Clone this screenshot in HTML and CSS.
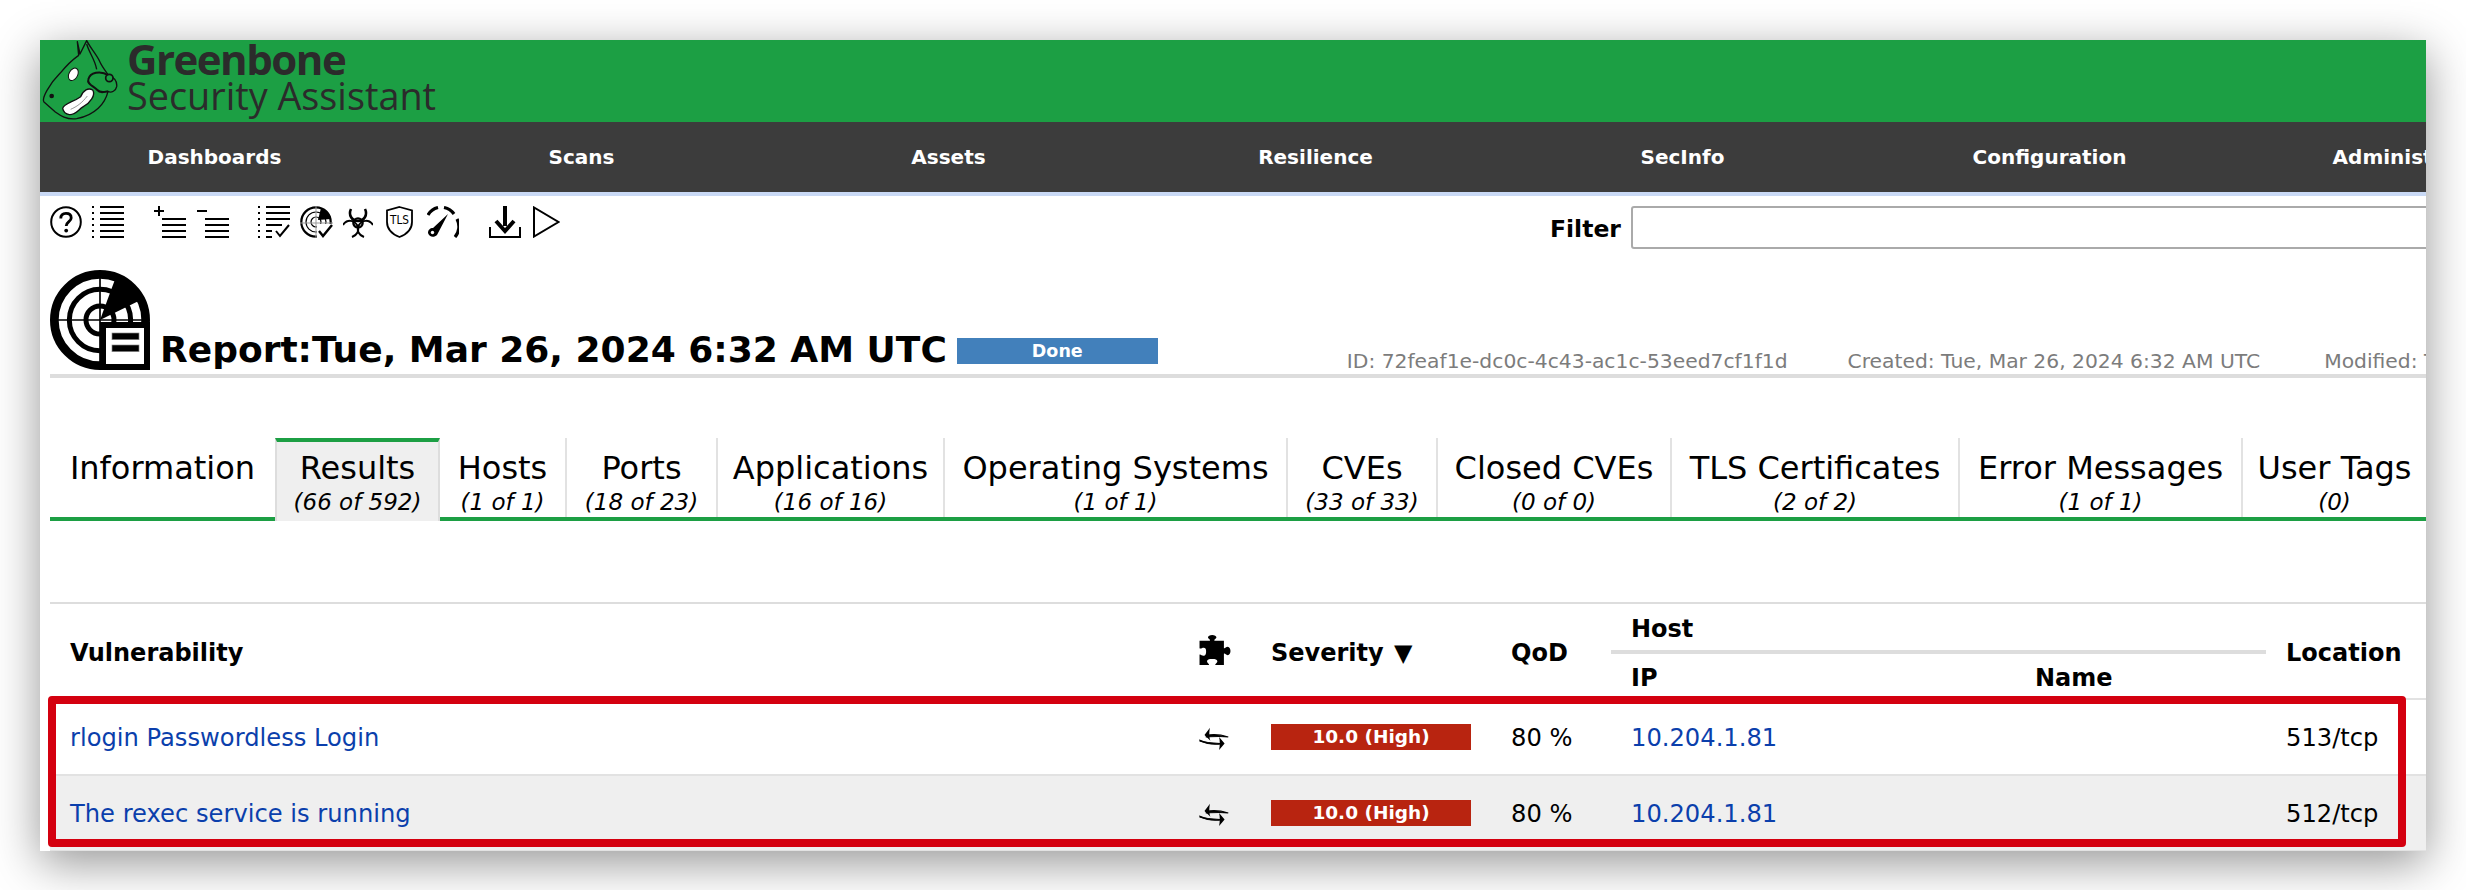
FILE: index.html
```html
<!DOCTYPE html>
<html lang="en">
<head>
<meta charset="utf-8">
<title>Greenbone Security Assistant</title>
<link rel="stylesheet" href="styles.css">
</head>
<body>
<div class="window">
  <header class="brand">
    <svg class="logo" viewBox="0 0 270 255">
      <path d="M112 5 L120 42 L140 2 C150 22 168 42 178 62 C186 80 196 92 206 106 C222 112 232 124 230 140 C228 152 214 160 204 154 C196 190 165 226 110 236 C80 240 60 226 46 216 L12 186 C4 176 28 132 60 100 C78 78 96 60 116 46 Z" fill="#1c9f44" stroke="#111" stroke-width="4" stroke-linejoin="round"/>
      <path d="M206 106 C180 90 150 98 145 118 C140 132 160 138 172 150 C182 160 190 156 204 154" fill="#1c9f44" stroke="#111" stroke-width="6"/>
      <circle cx="208" cy="114" r="11" fill="#1c9f44" stroke="#111" stroke-width="5"/>
      <path d="M140 12 C148 40 165 58 170 88" fill="none" stroke="#111" stroke-width="4"/>
      <ellipse cx="100" cy="103" rx="13" ry="20" transform="rotate(28 100 103)" fill="#fff" stroke="#111" stroke-width="3"/>
      <circle cx="35" cy="168" r="7" fill="#111"/>
      <path d="M68 205 C72 190 100 186 122 170 C130 150 145 142 158 150 C168 165 150 190 130 200 C112 212 105 226 88 224 C76 222 70 215 68 205 Z" fill="#fff" stroke="#111" stroke-width="4"/>
      <path d="M92 208 C110 200 125 190 142 168" fill="none" stroke="#999" stroke-width="3"/>
    </svg>
    <div class="wordmark">
      <div class="wordmark-top">Greenbone</div>
      <div class="wordmark-sub">Security Assistant</div>
    </div>
  </header>

  <nav class="menu">
    <span class="menu-item">Dashboards</span>
    <span class="menu-item">Scans</span>
    <span class="menu-item">Assets</span>
    <span class="menu-item">Resilience</span>
    <span class="menu-item">SecInfo</span>
    <span class="menu-item">Configuration</span>
    <span class="menu-item">Administration</span>
  </nav>

  <section class="toolbar">
    <div class="tools">
      <svg class="ic ic-help" viewBox="0 0 32 32"><circle cx="16" cy="16" r="14.8" fill="none" stroke="#000" stroke-width="2"/><path d="M10.8 12.5 C10.8 9 13 7.4 16 7.4 C19.2 7.4 21.2 9.2 21.2 11.9 C21.2 15.6 16.2 15.6 16.2 20" fill="none" stroke="#000" stroke-width="2.8"/><circle cx="16.2" cy="24.6" r="1.9"/></svg>
      <svg class="ic ic-list" viewBox="0 0 32 32"><g class="lines"><path d="M8 1H32M8 7H32M8 13H32M8 19H32M8 25H32M8 31H32"/><path d="M0 1H2M0 7H2M0 13H2M0 19H2M0 25H2M0 31H2"/></g></svg>
      <svg class="ic ic-plus" viewBox="0 0 33 32"><g class="lines"><path d="M9 13H33M9 19H33M9 25H33M9 31H33"/><path d="M1 5H11M6 0V10"/></g></svg>
      <svg class="ic ic-minus" viewBox="0 0 33 32"><g class="lines"><path d="M9 13H33M9 19H33M9 25H33M9 31H33"/><path d="M1 5H11"/></g></svg>
      <svg class="ic ic-check" viewBox="0 0 32 32"><g class="lines"><path d="M8 1H32M8 7H32M8 13H32M8 19H24M8 25H14M8 31H14"/><path d="M0 1H2M0 7H2M0 13H2M0 19H2M0 25H2M0 31H2"/><path d="M18 25L22 30L31 19" stroke-width="2.4"/></g></svg>
      <svg class="ic ic-radar" viewBox="0 0 33 32"><circle cx="16" cy="16" r="14.7" fill="none" stroke="#000" stroke-width="2.2"/><circle cx="16" cy="16" r="10" fill="none" stroke="#000" stroke-width="1.2"/><circle cx="16" cy="16" r="5" fill="none" stroke="#000" stroke-width="1.2"/><path d="M18 14L21 2A15 15 0 0 1 31 13Z"/><path d="M0 17H33M16 0V32" stroke="#999" stroke-width="1"/><rect x="17" y="18" width="16" height="14" fill="#fff"/><path d="M19 25L23 30L32 19" fill="none" stroke="#000" stroke-width="2.4"/></svg>
      <svg class="ic ic-bio" viewBox="0 0 30 32"><g fill="none" stroke="#000"><circle cx="15" cy="17" r="4.6" stroke-width="2.4"/><path d="M8 3C5 9 9 15 15 15C21 15 25 9 22 3" stroke-width="2.6"/><path d="M0 19C4 13 11 14 14 19C17 25 14 29 9 31" stroke-width="2"/><path d="M30 19C26 13 19 14 16 19C13 25 16 29 21 31" stroke-width="2"/></g></svg>
      <svg class="ic ic-tls" viewBox="0 0 27 32"><path d="M13.500 1L26 4.500V16C26 24 20 28.500 13.500 31C7 28.500 1 24 1 16V4.500Z" fill="none" stroke="#000" stroke-width="1.800"/><text class="tls-text" x="13.500" y="18" textLength="19" lengthAdjust="spacingAndGlyphs">TLS</text></svg>
      <svg class="ic ic-gauge" viewBox="0 0 32 32"><path d="M1 9A16 16 0 0 1 11 1.500" fill="none" stroke="#000" stroke-width="3.200"/><path d="M17 1.500A16 16 0 0 1 27 8" fill="none" stroke="#000" stroke-width="3.200"/><path d="M30 13A16 16 0 0 1 28 31" fill="none" stroke="#000" stroke-width="3.200"/><path d="M21 8L10 29C7 32 2 31 1 27C1 24 3 22 6 22Z"/><circle cx="5.500" cy="26.500" r="1.700" fill="#fff"/></svg>
      <svg class="ic ic-down" viewBox="0 0 32 32"><path d="M1 21V31H31V21" fill="none" stroke="#000" stroke-width="2"/><path d="M16 0V20" stroke="#000" stroke-width="4"/><path d="M7 15L16 25L25 15" fill="none" stroke="#000" stroke-width="4"/></svg>
      <svg class="ic ic-play" viewBox="0 0 27 32"><path d="M1 1.500V30.500L25.500 16Z" fill="none" stroke="#000" stroke-width="2"/></svg>
    </div>
    <div class="filter">
      <label class="filter-label" for="filter-input">Filter</label>
      <input class="filter-input" id="filter-input" type="text">
    </div>
  </section>

  <section class="heading">
    <svg class="report-icon" viewBox="0 0 330 330">
      <circle cx="165" cy="165" r="137" fill="#fff" stroke="#000" stroke-width="26"/>
      <circle cx="165" cy="165" r="92" fill="none" stroke="#000" stroke-width="15"/>
      <circle cx="165" cy="165" r="42" fill="none" stroke="#000" stroke-width="15"/>
      <path d="M165 30V300M30 165H300" stroke="#000" stroke-width="5"/>
      <path d="M165 165L213 35A140 140 0 0 1 287 105Z"/>
      <rect x="174" y="180" width="132" height="126" fill="#fff" stroke="#000" stroke-width="18"/>
      <rect x="201" y="204" width="81" height="20" fill="#000" stroke="#888" stroke-width="2"/>
      <rect x="201" y="240" width="81" height="20" fill="#000" stroke="#888" stroke-width="2"/>
    </svg>
    <h1 class="title">Report:Tue, Mar 26, 2024 6:32 AM UTC</h1>
    <div class="status">Done</div>
    <div class="meta">
      <span class="meta-id">ID: 72feaf1e-dc0c-4c43-ac1c-53eed7cf1f1d</span>
      <span class="meta-created">Created: Tue, Mar 26, 2024 6:32 AM UTC</span>
      <span class="meta-modified">Modified: Tue, Mar 26, 2024 7:11 AM UTC</span>
    </div>
  </section>

  <div class="tabs">
    <div class="tab tab-first"><div class="tab-name">Information</div></div>
    <div class="tab tab-active"><div class="tab-name">Results</div><div class="tab-count">(66 of 592)</div></div>
    <div class="tab tab-hosts"><div class="tab-name">Hosts</div><div class="tab-count">(1 of 1)</div></div>
    <div class="tab tab-ports"><div class="tab-name">Ports</div><div class="tab-count">(18 of 23)</div></div>
    <div class="tab tab-apps"><div class="tab-name">Applications</div><div class="tab-count">(16 of 16)</div></div>
    <div class="tab tab-os"><div class="tab-name">Operating Systems</div><div class="tab-count">(1 of 1)</div></div>
    <div class="tab tab-cves"><div class="tab-name">CVEs</div><div class="tab-count">(33 of 33)</div></div>
    <div class="tab tab-closed"><div class="tab-name">Closed CVEs</div><div class="tab-count">(0 of 0)</div></div>
    <div class="tab tab-tls"><div class="tab-name">TLS Certificates</div><div class="tab-count">(2 of 2)</div></div>
    <div class="tab tab-errors"><div class="tab-name">Error Messages</div><div class="tab-count">(1 of 1)</div></div>
    <div class="tab tab-tags"><div class="tab-name">User Tags</div><div class="tab-count">(0)</div></div>
  </div>

  <table class="results">
    <colgroup>
      <col class="c-vuln"><col class="c-icon"><col class="c-sev"><col class="c-qod"><col class="c-ip"><col class="c-name"><col class="c-loc">
    </colgroup>
    <thead>
      <tr class="head-a">
        <th rowspan="2">Vulnerability</th>
        <th rowspan="2"><svg class="puzzle" viewBox="0 0 33 32"><path d="M0 6H11C12 5 9 4 9 2.500C9 1 11 0 13.500 0C16 0 18 1 18 2.500C18 4 15 5 16 6H26V14C27 15 28 12.500 30 12.500C32 12.500 33 15 33 17C33 19 32 21.500 30 21.500C28 21.500 27 19 26 20V32H17C16 31 19 30 19 28C19 26 17 25.500 13.500 25.500C10 25.500 8 26 8 28C8 30 11 31 10 32H0V21C1 20 3 23 5 22C7 21 7 19.500 7 17C7 14.500 6 13.500 4.500 13.500C2.500 13.500 1 15 0 14Z"/></svg></th>
        <th rowspan="2">Severity <span class="sort-arrow">▼</span></th>
        <th rowspan="2">QoD</th>
        <th colspan="2" class="host-group">Host</th>
        <th rowspan="2">Location</th>
      </tr>
      <tr class="head-b">
        <th>IP</th>
        <th>Name</th>
      </tr>
    </thead>
    <tbody>
      <tr>
        <td><a class="link">rlogin Passwordless Login</a></td>
        <td><svg class="swap" viewBox="0 0 35 30" preserveAspectRatio="none"><use href="#swap-shape"/></svg></td>
        <td><div class="sev-bar">10.0 (High)</div></td>
        <td>80 %</td>
        <td><a class="link">10.204.1.81</a></td>
        <td></td>
        <td>513/tcp</td>
      </tr>
      <tr class="row-alt">
        <td><a class="link">The rexec service is running</a></td>
        <td><svg class="swap" viewBox="0 0 35 30" preserveAspectRatio="none"><use href="#swap-shape"/></svg></td>
        <td><div class="sev-bar">10.0 (High)</div></td>
        <td>80 %</td>
        <td><a class="link">10.204.1.81</a></td>
        <td></td>
        <td>512/tcp</td>
      </tr>
    </tbody>
  </table>

  <div class="highlight"></div>
</div>

<svg class="defs" width="0" height="0">
  <defs>
    <g id="swap-shape">
      <path d="M8 11C15 9 24 10 32 13C24 11.500 15 12.500 8 13Z" stroke="#000" stroke-width="1.200"/>
      <path d="M12 1L6 10.500L12.500 18C11 14 11 6 12 1Z"/>
      <path d="M1 17C8 21 17 21 26 21.500C17 24 8 22 1 18.500Z" stroke="#000" stroke-width="1.200"/>
      <path d="M22 13L28 21.500L22 30C23 24 23 18 22 13Z"/>
    </g>
  </defs>
</svg>
</body>
</html>
```

FILE: styles.css
```css
* { box-sizing: border-box; }

html, body {
  margin: 0;
  padding: 0;
  background: #fff;
  overflow: hidden;
}

body {
  padding: 40px 0 0 40px;
  height: 890px;
  font-family: "DejaVu Sans", Verdana, sans-serif;
  color: #000;
}

.window {
  position: relative;
  width: 2386px;
  height: 811px;
  overflow: hidden;
  background: #fff;
  box-shadow: 0 12px 44px rgba(0, 0, 0, 0.42);
}

.brand {
  display: flex;
  height: 82px;
  background: #1c9f44;
}

.logo {
  width: 90px;
  height: 85px;
  flex: none;
}

.wordmark {
  margin-left: -3px;
  padding-top: 1px;
  color: #2b2b2b;
  font-family: "Open Sans", sans-serif;
  white-space: nowrap;
}

.wordmark-top {
  font-size: 42px;
  font-weight: 700;
  letter-spacing: -1.5px;
  line-height: 35px;
}

.wordmark-sub {
  font-size: 37.800px;
  line-height: 39px;
}

.menu {
  position: relative;
  display: flex;
  height: 74px;
  margin-left: -9px;
  background: #3c3c3c;
  border-bottom: 4px solid #c9d9f5;
}

.menu-item {
  flex: none;
  width: 367px;
  height: 70px;
  line-height: 70px;
  text-align: center;
  color: #fff;
  font-size: 20px;
  font-weight: 700;
  white-space: nowrap;
}

.toolbar {
  display: flex;
  justify-content: space-between;
  height: 53px;
  padding: 10px 0 0 10px;
}

.tools {
  display: flex;
  align-items: flex-start;
}

.ic { display: block; height: 32px; flex: none; }
.ic-help { width: 32px; }
.ic-list { width: 32px; margin-left: 10px; }
.ic-plus { width: 33px; margin-left: 29px; }
.ic-minus { width: 33px; margin-left: 10px; }
.ic-check { width: 32px; margin-left: 29px; }
.ic-radar { width: 33px; margin-left: 10px; }
.ic-bio { width: 30px; margin-left: 10px; }
.ic-tls { width: 27px; margin-left: 13px; }
.ic-gauge { width: 32px; margin-left: 14px; }
.ic-down { width: 32px; margin-left: 30px; }
.ic-play { width: 27px; margin-left: 12px; }

.lines path { fill: none; stroke: #000; stroke-width: 2; }

.tls-text {
  font-family: "DejaVu Sans", sans-serif;
  font-size: 12px;
  text-anchor: middle;
  fill: #000;
}

.filter {
  display: flex;
  align-items: flex-start;
  flex: none;
  width: 876px;
  overflow: hidden;
}

.filter-label {
  flex: none;
  width: 81px;
  height: 43px;
  line-height: 47px;
  font-size: 23.500px;
  font-weight: 700;
}

.filter-input {
  flex: none;
  width: 900px;
  height: 43px;
  border: 2px solid #aaa;
  border-radius: 3px;
  background: #fff;
}

.heading {
  display: flex;
  align-items: flex-start;
  height: 129px;
  margin-left: 10px;
  padding-top: 21px;
  border-bottom: 4px solid #ddd;
  white-space: nowrap;
}

.report-icon {
  flex: none;
  width: 110px;
  height: 110px;
  margin: -5px 5px 0 -5px;
}

.title {
  flex: none;
  margin: 58px 0 0 0;
  font-size: 36px;
  font-weight: 700;
  line-height: 44px;
}

.status {
  flex: none;
  width: 201px;
  height: 26px;
  margin: 68px 0 0 10px;
  background: #4280bb;
  color: #fff;
  font-size: 17.500px;
  font-weight: 700;
  line-height: 26px;
  text-align: center;
}

.meta {
  display: flex;
  flex: none;
  margin: 79px 0 0 189px;
  font-size: 20.300px;
  line-height: 24px;
  color: #7c7c7c;
}

.meta-created { margin-left: 60px; }
.meta-modified { margin-left: 64px; }

.tabs {
  display: flex;
  height: 83px;
  margin: 60px 0 0 10px;
  border-bottom: 4px solid #1c9f44;
  white-space: nowrap;
}

.tab {
  flex: none;
  height: 79px;
  padding-top: 10px;
  border-left: 2px solid #e2e2e2;
  text-align: center;
}

.tab-first { width: 225px; border-left: 0; }

.tab-active {
  width: 165px;
  height: 83px;
  padding-top: 6px;
  border-top: 4px solid #1c9f44;
  border-left: 2px solid #ddd;
  border-right: 2px solid #ddd;
  background: #efefef;
}

.tab-hosts { width: 125px; border-left: 0; }
.tab-ports { width: 151px; }
.tab-apps { width: 227px; }
.tab-os { width: 343px; }
.tab-cves { width: 150px; }
.tab-closed { width: 234px; }
.tab-tls { width: 288px; }
.tab-errors { width: 283px; }
.tab-tags { width: 185px; }

.tab-name {
  font-size: 32px;
  line-height: 40px;
}

.tab-count {
  font-size: 23px;
  font-style: italic;
  line-height: 28px;
}

.results {
  width: 2376px;
  margin: 81px 0 0 10px;
  border-collapse: collapse;
  table-layout: fixed;
  border-top: 2px solid #ddd;
  font-size: 24.200px;
}

.c-vuln { width: 1127px; }
.c-icon { width: 74px; }
.c-sev { width: 240px; }
.c-qod { width: 120px; }
.c-ip { width: 404px; }
.c-name { width: 251px; }
.c-loc { width: 160px; }

.results th {
  padding: 4px 0 0 20px;
  text-align: left;
  font-size: 24px;
  font-weight: 700;
  white-space: nowrap;
}

.results thead { border-bottom: 2px solid #e2e2e2; }

.head-a { height: 49px; }
.head-b { height: 47px; }

.host-group { border-bottom: 4px solid #ddd; }

.sort-arrow { font-size: 24px; margin-left: 2px; }

.puzzle {
  display: block;
  width: 32px;
  height: 30px;
  margin: -6px 0 0 2px;
}

.results td {
  height: 76px;
  padding: 2px 0 0 20px;
  white-space: nowrap;
  border-bottom: 2px solid #e2e2e2;
}

.row-alt { background: #efefef; }

.link { color: #0b3fac; }

.swap {
  display: block;
  width: 32px;
  height: 23px;
  margin-left: 2px;
}

.sev-bar {
  width: 200px;
  height: 26px;
  margin-top: -2px;
  background: #b82410;
  color: #fff;
  font-size: 18.500px;
  font-weight: 700;
  line-height: 26px;
  text-align: center;
}

.highlight {
  position: absolute;
  left: 8px;
  top: 656px;
  width: 2358px;
  height: 151px;
  border: 8px solid #d4000f;
  border-radius: 4px;
}

.defs { position: absolute; }
```
